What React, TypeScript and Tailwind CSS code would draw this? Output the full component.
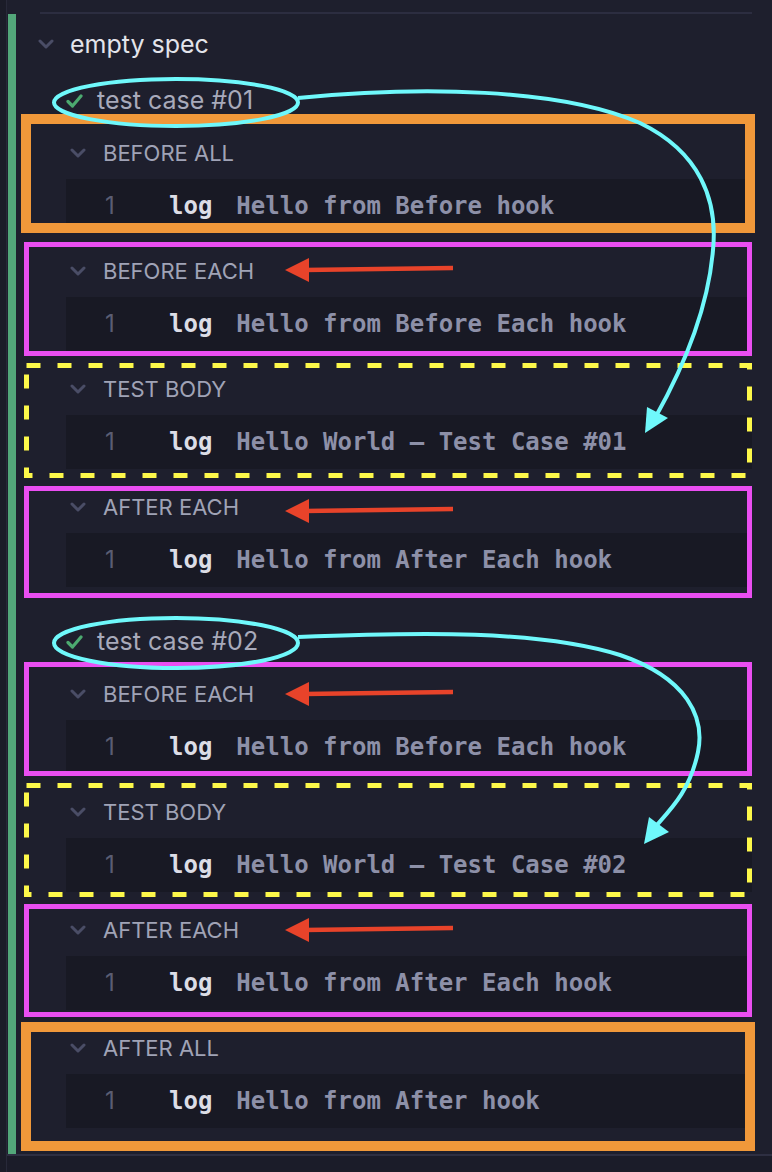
import React from "react";

const Chevron = () => (
  <svg width="16" height="10" viewBox="0 0 16 10" className="shrink-0">
    <path d="M2 2 L8 8 L14 2" fill="none" stroke="#4a4d66" strokeWidth="3" strokeLinecap="round" strokeLinejoin="round" />
  </svg>
);

const Check = () => (
  <svg width="17" height="14" viewBox="0 0 17 14" className="shrink-0">
    <path d="M2 7.5 L6.5 12 L15 2" fill="none" stroke="#4caa70" strokeWidth="3.2" strokeLinecap="round" strokeLinejoin="round" />
  </svg>
);

const Hook = ({ title, msg }: { title: string; msg: string }) => (
  <div className="mb-[12px]">
    <div className="h-[52px] pl-[54px] flex items-center gap-[17px]">
      <Chevron />
      <span className="text-[22px] leading-none text-[#a0a3b6]">{title}</span>
    </div>
    <div className="h-[54px] ml-[50px] bg-[#181924] flex items-center">
      <div className="w-[103px] shrink-0 pl-[39px] text-[24px] leading-none text-[#5a5d73]">1</div>
      <span className="font-['DejaVu_Sans_Mono',monospace] font-bold text-[24px] leading-none text-[#dcdde6]">log</span>
      <span className="ml-[24px] font-['DejaVu_Sans_Mono',monospace] font-bold text-[24px] leading-none text-[#8d90a8] whitespace-pre">{msg}</span>
    </div>
  </div>
);

const TestRow = ({ name, className = "" }: { name: string; className?: string }) => (
  <div className={"h-[53px] pl-[50px] flex items-center gap-[14px] " + className}>
    <Check />
    <span className="text-[25px] leading-none text-[#a8aabb]">{name}</span>
  </div>
);

const RedArrow = ({ y }: { y: number }) => (
  <g>
    <line x1={453} y1={y - 2} x2={304} y2={y} stroke="#e8432a" strokeWidth={4.5} />
    <polygon points={`285,${y} 309,${y - 12} 309,${y + 12}`} fill="#e8432a" />
  </g>
);

const Overlay = () => (
  <svg width="772" height="1172" viewBox="0 0 772 1172" className="absolute top-0 left-0 pointer-events-none">
    {/* orange boxes */}
    <rect x={26} y={119} width={724} height={109} fill="none" stroke="#f0983a" strokeWidth={10} />
    <rect x={26} y={1027} width={724} height={119} fill="none" stroke="#f0983a" strokeWidth={10} />
    {/* magenta boxes */}
    <rect x={26.5} y={244.5} width={723} height={109} fill="none" stroke="#ea4ef1" strokeWidth={5} />
    <rect x={26.5} y={488.5} width={723} height={107} fill="none" stroke="#ea4ef1" strokeWidth={5} />
    <rect x={26.5} y={664.5} width={723} height={109} fill="none" stroke="#ea4ef1" strokeWidth={5} />
    <rect x={26.5} y={906.5} width={723} height={108} fill="none" stroke="#ea4ef1" strokeWidth={5} />
    {/* yellow dashed boxes */}
    <rect x={26.5} y={365.5} width={723} height={110} fill="none" stroke="#fdf84a" strokeWidth={5} strokeDasharray="14 17" />
    <rect x={26.5} y={785.5} width={723} height={109} fill="none" stroke="#fdf84a" strokeWidth={5} strokeDasharray="14 17" />
    {/* red arrows */}
    <RedArrow y={270} />
    <RedArrow y={511} />
    <RedArrow y={694} />
    <RedArrow y={930} />
    {/* cyan ellipses */}
    <ellipse cx={176} cy={102.5} rx={122} ry={23.5} fill="none" stroke="#6ff8fb" strokeWidth={4} />
    <ellipse cx={176} cy={643} rx={122} ry={25} fill="none" stroke="#6ff8fb" strokeWidth={4} />
    {/* cyan curves */}
    <path d="M298 98 C420 86 560 88 640 123 C700 152 718 200 713 250 C708 310 682 370 655 418" fill="none" stroke="#6ff8fb" strokeWidth={4} />
    <polygon points="645,433 647,407 668,418" fill="#6ff8fb" />
    <path d="M298 637 C420 632 540 630 620 655 C688 678 705 718 698 752 C690 790 672 808 656 826" fill="none" stroke="#6ff8fb" strokeWidth={4} />
    <polygon points="644,844 649,817 669,832" fill="#6ff8fb" />
  </svg>
);

export default function App() {
  return (
    <div className="relative w-[772px] h-[1172px] bg-[#1e1f2d] overflow-hidden font-['Inter',sans-serif] flex">
      <div className="w-[7px] h-full bg-[#1b1c28] border-r border-[#282939] shrink-0" />
      <div className="flex-1 flex flex-col">
        <div className="h-[12px]" />
        <div className="h-[2px] ml-[33px] mr-[20px] bg-[#2c2d40]" />
        <div className="h-[1140px] flex">
          <div className="w-[1px]" />
          <div className="w-[8px] bg-[#53a77a]" />
          <div className="flex-1 pr-[20px] flex flex-col">
            <div className="h-[60px] pl-[22px] flex items-center gap-4">
              <Chevron />
              <span className="text-[25px] leading-none text-[#e3e4eb]">empty spec</span>
            </div>
            <TestRow name="test case #01" />
            <Hook title="BEFORE ALL" msg="Hello from Before hook" />
            <Hook title="BEFORE EACH" msg="Hello from Before Each hook" />
            <Hook title="TEST BODY" msg="Hello World – Test Case #01" />
            <Hook title="AFTER EACH" msg="Hello from After Each hook" />
            <TestRow name="test case #02" className="mt-[16px]" />
            <Hook title="BEFORE EACH" msg="Hello from Before Each hook" />
            <Hook title="TEST BODY" msg="Hello World – Test Case #02" />
            <Hook title="AFTER EACH" msg="Hello from After Each hook" />
            <Hook title="AFTER ALL" msg="Hello from After hook" />
          </div>
        </div>
        <div className="h-[2px] bg-[#2e2f42]" />
        <div className="flex-1 bg-[#1b1c29]" />
      </div>
      <Overlay />
    </div>
  );
}
